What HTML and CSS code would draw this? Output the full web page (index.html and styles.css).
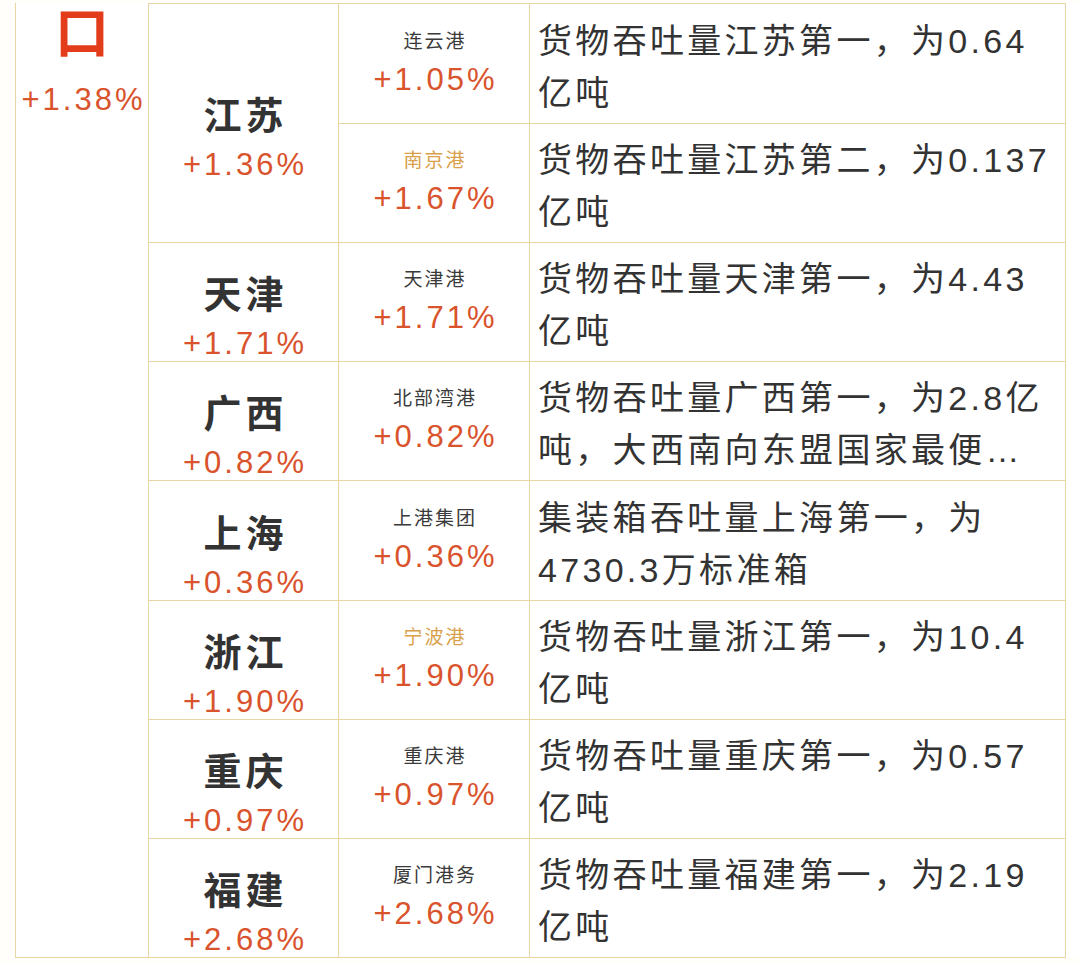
FILE: index.html
```html
<!DOCTYPE html>
<html lang="zh-CN">
<head>
<meta charset="utf-8">
<title>港口吞吐量</title>
<link rel="stylesheet" href="styles.css">
</head>
<body>
<div class="table">
  <div class="cell total">
    <div class="total-name">口</div>
    <div class="total-pct">+1.38%</div>
  </div>

  <div class="cell prov top span2">
    <div class="prov-name">江苏</div>
    <div class="pct">+1.36%</div>
  </div>
  <div class="cell port top">
    <div class="port-name">连云港</div>
    <div class="pct">+1.05%</div>
  </div>
  <div class="cell desc top"><p>货物吞吐量江苏第一，为0.64亿吨</p></div>

  <div class="cell port">
    <div class="port-name gold">南京港</div>
    <div class="pct">+1.67%</div>
  </div>
  <div class="cell desc"><p>货物吞吐量江苏第二，为0.137亿吨</p></div>

  <div class="cell prov">
    <div class="prov-name">天津</div>
    <div class="pct">+1.71%</div>
  </div>
  <div class="cell port">
    <div class="port-name">天津港</div>
    <div class="pct">+1.71%</div>
  </div>
  <div class="cell desc"><p>货物吞吐量天津第一，为4.43亿吨</p></div>

  <div class="cell prov">
    <div class="prov-name">广西</div>
    <div class="pct">+0.82%</div>
  </div>
  <div class="cell port">
    <div class="port-name">北部湾港</div>
    <div class="pct">+0.82%</div>
  </div>
  <div class="cell desc"><p>货物吞吐量广西第一，为2.8亿吨，大西南向东盟国家最便…</p></div>

  <div class="cell prov">
    <div class="prov-name">上海</div>
    <div class="pct">+0.36%</div>
  </div>
  <div class="cell port">
    <div class="port-name">上港集团</div>
    <div class="pct">+0.36%</div>
  </div>
  <div class="cell desc"><p>集装箱吞吐量上海第一，为4730.3万标准箱</p></div>

  <div class="cell prov">
    <div class="prov-name">浙江</div>
    <div class="pct">+1.90%</div>
  </div>
  <div class="cell port">
    <div class="port-name gold">宁波港</div>
    <div class="pct">+1.90%</div>
  </div>
  <div class="cell desc"><p>货物吞吐量浙江第一，为10.4亿吨</p></div>

  <div class="cell prov">
    <div class="prov-name">重庆</div>
    <div class="pct">+0.97%</div>
  </div>
  <div class="cell port">
    <div class="port-name">重庆港</div>
    <div class="pct">+0.97%</div>
  </div>
  <div class="cell desc"><p>货物吞吐量重庆第一，为0.57亿吨</p></div>

  <div class="cell prov">
    <div class="prov-name">福建</div>
    <div class="pct">+2.68%</div>
  </div>
  <div class="cell port">
    <div class="port-name">厦门港务</div>
    <div class="pct">+2.68%</div>
  </div>
  <div class="cell desc"><p>货物吞吐量福建第一，为2.19亿吨</p></div>
</div>
</body>
</html>
```

FILE: styles.css
```css
* { box-sizing: border-box; }

html, body {
  margin: 0;
  padding: 0;
  background: #fffefa;
}

body {
  padding-top: 3px;
  font-family: "Liberation Sans", "Noto Sans CJK SC", sans-serif;
  color: #333333;
}

.table {
  margin-left: 15px;
  display: grid;
  grid-template-columns: 134px 190px 191px 536px;
  grid-template-rows: 121px 119px 119px 119px 120px 119px 119px 119px;
  background: #ffffff;
}

.cell {
  border-right: 1px solid #e8d7a4;
  border-bottom: 1px solid #e8d7a4;
  background: #ffffff;
}

.cell.top { border-top: 1px solid #e8d7a4; }

.total {
  grid-column: 1;
  grid-row: 1 / span 8;
  border-left: 1px solid #e8d7a4;
  display: flex;
  flex-direction: column;
  align-items: center;
}

.total-name {
  font-family: "Noto Sans CJK SC", sans-serif;
  font-size: 54px;
  font-weight: 700;
  line-height: 58px;
  margin-top: -2px;
  color: #e23c1b;
}

.total-pct {
  font-size: 31px;
  line-height: 82px;
  letter-spacing: 3px;
  padding-left: 3px;
  color: #d9532c;
}

.prov {
  grid-column: 2;
  display: flex;
  flex-direction: column;
  align-items: center;
  justify-content: center;
  padding-top: 32px;
}

.prov.span2 { grid-row: 1 / span 2; }

.prov-name {
  font-family: "Noto Sans CJK SC", sans-serif;
  font-size: 38px;
  font-weight: 700;
  line-height: 52px;
  letter-spacing: 4px;
  padding-left: 4px;
  color: #333333;
}

.pct {
  font-size: 31px;
  line-height: 52px;
  letter-spacing: 3px;
  padding-left: 3px;
  color: #d9532c;
}

.port {
  grid-column: 3;
  display: flex;
  flex-direction: column;
  align-items: center;
  justify-content: center;
}

.port-name {
  font-family: "Noto Sans CJK SC", sans-serif;
  font-size: 19px;
  line-height: 32px;
  letter-spacing: 2px;
  padding-left: 2px;
  color: #3a3a3a;
}

.port-name.gold { color: #d8a04a; }

.port .pct { line-height: 48px; }

.desc {
  grid-column: 4;
  display: flex;
  align-items: center;
  padding: 6px 6px 0 8px;
}

.desc p {
  margin: 0;
  font-size: 34px;
  line-height: 52px;
  letter-spacing: 3.3px;
  color: #333333;
  display: -webkit-box;
  -webkit-box-orient: vertical;
  -webkit-line-clamp: 2;
  overflow: hidden;
}
```
